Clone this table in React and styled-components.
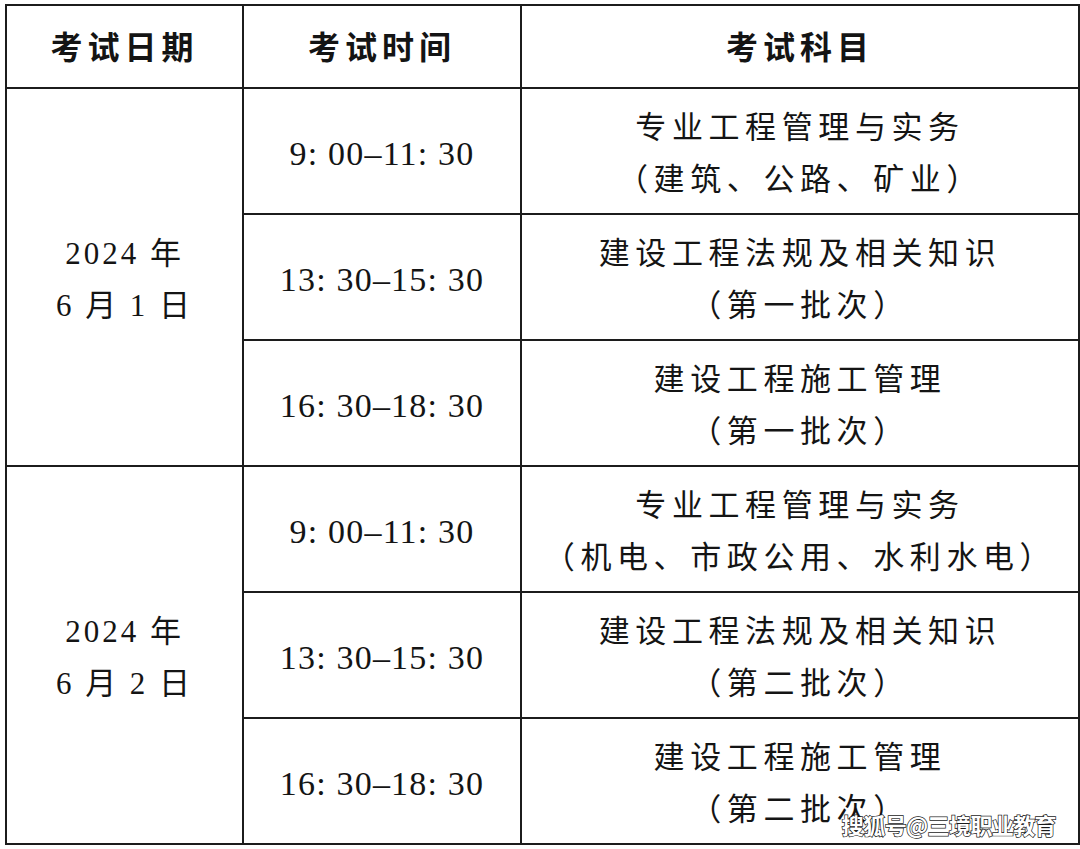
import React from 'react'
import styled, { createGlobalStyle } from 'styled-components'

const GlobalStyle = createGlobalStyle`
  html, body {
    margin: 0;
    padding: 0;
    background: #fff;
  }
`

const Page = styled.div`
  position: relative;
  width: 1080px;
  height: 849px;
  padding: 4px 0 0 5px;
  box-sizing: border-box;
  background: #fff;
`

const Table = styled.table`
  border-collapse: collapse;
  table-layout: fixed;
  width: 1073px;
  color: #141414;
  font-family: "Liberation Serif", "Noto Sans CJK SC", serif;
`

const HeadCell = styled.th`
  height: 77px;
  padding: 0 0 4px;
  border: 2px solid #1c1c1c;
  text-align: center;
  vertical-align: middle;
  font-family: "Noto Sans CJK SC", sans-serif;
  font-weight: 700;
  font-size: 32px;
  letter-spacing: 5px;
`

const sizes = {
  time: { font: '34px', spacing: '1.2px' },
  date: { font: '31px', spacing: '3px' },
  subject: { font: '31px', spacing: '5.6px' }
}

const Cell = styled.td`
  height: 118px;
  padding: 6px 0 0;
  border: 2px solid #1c1c1c;
  text-align: center;
  vertical-align: middle;
  font-size: ${p => sizes[p.$kind].font};
  letter-spacing: ${p => sizes[p.$kind].spacing};
  line-height: 52px;
`

const Line = styled.div`
  white-space: nowrap;
`

const Watermark = styled.div`
  position: absolute;
  right: 24px;
  bottom: 9px;
  font-family: "Noto Sans CJK SC", sans-serif;
  font-weight: 700;
  font-size: 22px;
  letter-spacing: -0.6px;
  color: #fff;
  -webkit-text-stroke: 1.4px #1a1a1a;
  paint-order: stroke fill;
`

const days = [
  {
    date: ['2024 年', '6 月 1 日'],
    batch: '第一批次',
    first: '（建筑、公路、矿业）'
  },
  {
    date: ['2024 年', '6 月 2 日'],
    batch: '第二批次',
    first: '（机电、市政公用、水利水电）'
  }
]

const slots = ['9: 00–11: 30', '13: 30–15: 30', '16: 30–18: 30']

export default function App () {
  return (
    <Page>
      <GlobalStyle />
      <Table>
        <colgroup>
          <col style={{ width: 237 }} />
          <col style={{ width: 278 }} />
          <col style={{ width: 558 }} />
        </colgroup>
        <thead>
          <tr>
            <HeadCell>考试日期</HeadCell>
            <HeadCell>考试时间</HeadCell>
            <HeadCell>考试科目</HeadCell>
          </tr>
        </thead>
        <tbody>
          {days.map(day => {
            const subjects = [
              ['专业工程管理与实务', day.first],
              ['建设工程法规及相关知识', `（${day.batch}）`],
              ['建设工程施工管理', `（${day.batch}）`]
            ]
            return subjects.map((subject, i) => (
              <tr key={day.date[1] + i}>
                {i === 0 && (
                  <Cell rowSpan={3} $kind='date'>
                    <Line>{day.date[0]}</Line>
                    <Line>{day.date[1]}</Line>
                  </Cell>
                )}
                <Cell $kind='time'>{slots[i]}</Cell>
                <Cell $kind='subject'>
                  <Line>{subject[0]}</Line>
                  <Line>{subject[1]}</Line>
                </Cell>
              </tr>
            ))
          })}
        </tbody>
      </Table>
      <Watermark>搜狐号@三境职业教育</Watermark>
    </Page>
  )
}
